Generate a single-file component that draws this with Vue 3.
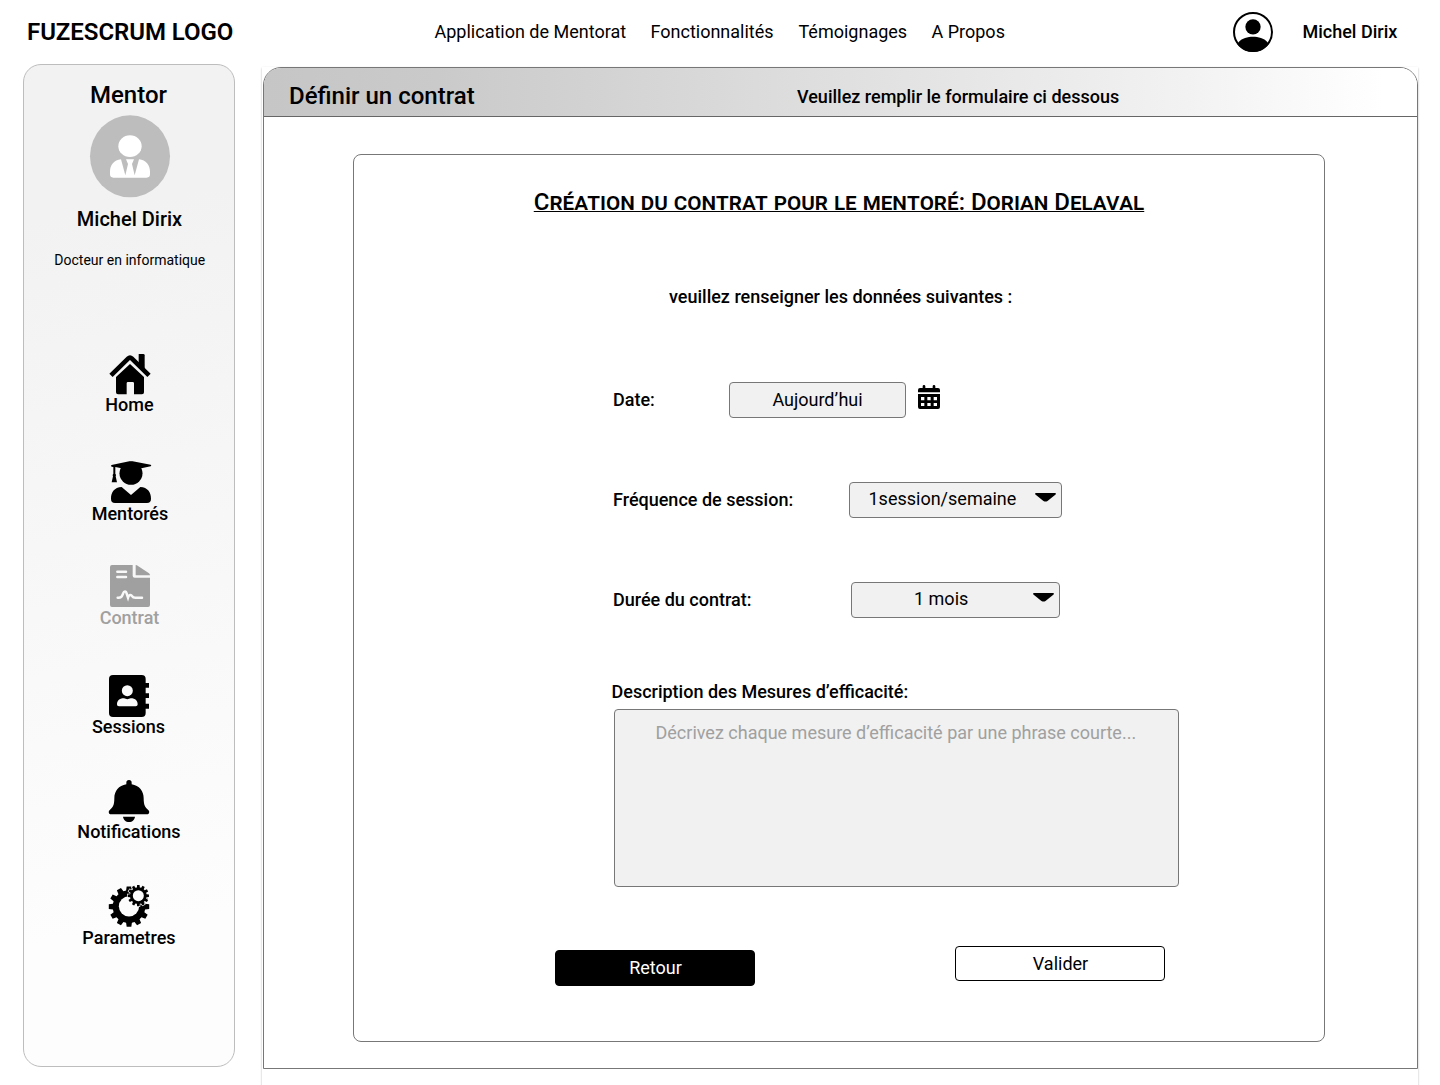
<script setup>
const links = [
  { label: 'Application de Mentorat', width: 216 },
  { label: 'Fonctionnalités', width: 148 },
  { label: 'Témoignages', width: 133 },
  { label: 'A Propos', width: 90 },
]

const menu = [
  { id: 'home', label: 'Home' },
  { id: 'mentees', label: 'Mentorés' },
  { id: 'contract', label: 'Contrat', active: true },
  { id: 'sessions', label: 'Sessions' },
  { id: 'bell', label: 'Notifications' },
  { id: 'gears', label: 'Parametres' },
]

// Closed outline of a cog with `n` trapezoidal teeth
function gear(cx, cy, outer, inner, n) {
  const pts = []
  const step = (Math.PI * 2) / n
  for (let i = 0; i < n; i++) {
    const a = i * step - Math.PI / 2
    for (const [r, o] of [[inner, -0.34], [outer, -0.22], [outer, 0.22], [inner, 0.34]]) {
      pts.push(`${(cx + r * Math.cos(a + o * step)).toFixed(1)} ${(cy + r * Math.sin(a + o * step)).toFixed(1)}`)
    }
  }
  return `M${pts.join('L')}Z`
}
const bigGear = gear(63, 65, 61, 49, 12)
const smallGear = gear(91, 32, 32, 25, 12)
</script>

<template>
  <div class="page">
    <header class="top">
      <div class="logo">FUZESCRUM LOGO</div>
      <nav class="links">
        <a v-for="l in links" :key="l.label" :style="{ width: l.width + 'px' }">{{ l.label }}</a>
      </nav>
      <svg class="avatar" viewBox="0 0 120 120">
        <circle cx="60" cy="60" r="57" fill="#fff" stroke="#000" stroke-width="6" />
        <circle cx="60" cy="44.500" r="23" />
        <path d="M13 97L17 90C27 78 44 74 60 74s33 4 43 16L107 97A60 60 0 0 1 13 97Z" />
      </svg>
      <div class="user">Michel Dirix</div>
    </header>

    <div class="body">
      <aside class="side">
        <h2>Mentor</h2>
        <svg class="portrait" viewBox="0 0 240 246">
          <ellipse cx="120" cy="124" rx="120" ry="123" fill="#bdbdbd" />
          <g fill="#fff">
            <ellipse cx="120" cy="93.500" rx="35" ry="32.500" />
            <path d="M93 133C72 135 60 151 60 170v8q0 10 10 10h100q10 0 10-10v-8c0-19-12-35-33-37L134 181l-8-34 6-14h-24l6 14-8 34Z" />
          </g>
        </svg>
        <div class="name">Michel Dirix</div>
        <div class="job">Docteur en informatique</div>
        <nav class="menu">
          <a v-for="m in menu" :key="m.id" :class="[m.id, { active: m.active }]">
            <svg viewBox="0 0 126 126" fill="currentColor">
              <template v-if="m.id === 'home'">
                <path d="M24 72 66 33l42 39v46q0 6-6 6H78V91q0-4-4-4H60q-4 0-4 4v33H30q-6 0-6-6Z" />
                <path d="m9 67 52-51q5-5 10 0l52 51" fill="none" stroke="currentColor" stroke-width="14" stroke-linejoin="round" />
                <path d="M92 3h14q4 0 4 4v43L92 32Z" />
              </template>
              <template v-else-if="m.id === 'mentees'">
                <circle cx="69" cy="37" r="34.500" />
                <path d="M9 14Q10 11 14 11L64 1q5-1 10 0l54 10q4 3 0 5L76 27q-5 1-10 0L22 18v20q4 3 1 8l4 18H11l4-18q-3-5 1-8V18Q9 18 9 14Z" />
                <path d="M41 78 69 102 97 78c22 1 32 16 32 35 0 9-4 13-12 13H21c-8 0-12-4-12-13 0-19 10-34 32-35Z" />
              </template>
              <template v-else-if="m.id === 'contract'">
                <path d="M12 0h62v32q0 6 6 6h46v82q0 6-6 6H12q-6 0-6-6V6q0-6 6-6Z" />
                <path d="M83 0q4 0 7 3l33 22q3 3 3 6H83Z" />
                <path d="M28 20h26M28 36h26" fill="none" stroke="#f8f8f8" stroke-width="7.500" stroke-linecap="round" />
                <path d="M29 98c10 1 12-2 16-12 3-9 9-9 11 0l4 12c3-10 9-10 13-4 2 4 5 4 9 4h20" fill="none" stroke="#f8f8f8" stroke-width="7.500" stroke-linecap="round" />
              </template>
              <template v-else-if="m.id === 'sessions'">
                <rect x="3" y="0" width="110" height="126" rx="12" />
                <path d="M106 24h17v14h-17zM106 55h17v14h-17zM106 86h17v15h-17z" />
                <circle cx="58" cy="47" r="16.500" fill="#fafafa" />
                <path d="M48 70q10 5 20 0c15 0 21 8 21 18 0 4-3 6-6 6H33c-4 0-6-2-6-6 0-10 6-18 21-18Z" fill="#fafafa" />
              </template>
              <template v-else-if="m.id === 'bell'">
                <path d="M55 13V8a8 8 0 0 1 16 0v5c23 4 36 20 36 42 0 20 4 27 13 34 7 6 3 14-3 14H9c-6 0-10-8-3-14 9-7 13-14 13-34 0-22 13-38 36-42Z" />
                <path d="M45 110h36c-1 9-8 16-18 16s-17-7-18-16Z" />
              </template>
              <template v-else>
                <path :d="bigGear" />
                <circle cx="63" cy="64" r="30.500" fill="#fcfcfc" />
                <path :d="smallGear" stroke="#fcfcfc" stroke-width="4" />
                <path :d="smallGear" />
                <circle cx="91" cy="32" r="16.500" fill="#fcfcfc" />
              </template>
            </svg>
            <span>{{ m.label }}</span>
          </a>
        </nav>
      </aside>

      <main class="panel">
        <div class="frame">
          <div class="bar">
            <h1>Définir un contrat</h1>
            <p>Veuillez remplir le formulaire ci dessous</p>
          </div>
          <section class="card">
            <h3><span>Création du contrat pour le mentoré: Dorian Delaval</span></h3>
            <p class="intro">veuillez renseigner les données suivantes :</p>
            <div class="row date">
              <label>Date:</label>
              <div class="field">Aujourd’hui</div>
              <svg class="cal" viewBox="0 0 66 72">
                <path d="M18 0q4 0 4 4v5h22V4q0-4 4-4t4 4v5h8q6 0 6 6v7H0v-7q0-6 6-6h8V4q0-4 4-4Z" />
                <path fill-rule="evenodd" d="M0 27h66v39q0 6-6 6H6q-6 0-6-6ZM9 36v10h10V36Zm19 0v10h10V36Zm19 0v10h10V36ZM9 54v9h10v-9Zm19 0v9h10v-9Zm19 0v9h10v-9Z" />
              </svg>
            </div>
            <div class="row freq">
              <label>Fréquence de session:</label>
              <div class="field select"><span>1session/semaine</span>
                <svg viewBox="0 0 62 26"><path d="M3 0h56q5 1 1 5L37 23q-6 4-12 0L2 5q-4-4 1-5Z" /></svg>
              </div>
            </div>
            <div class="row term">
              <label>Durée du contrat:</label>
              <div class="field select"><span>1 mois</span>
                <svg viewBox="0 0 62 26"><path d="M3 0h56q5 1 1 5L37 23q-6 4-12 0L2 5q-4-4 1-5Z" /></svg>
              </div>
            </div>
            <label class="desc">Description des Mesures d’efficacité:</label>
            <div class="area">Décrivez chaque mesure d’efficacité par une phrase courte...</div>
            <div class="actions">
              <button class="back">Retour</button>
              <button class="ok">Valider</button>
            </div>
          </section>
        </div>
      </main>
    </div>
  </div>
</template>

<style>
body { background: #fff; overflow: hidden; }
</style>

<style scoped>
.page { width: 1440px; height: 1085px; overflow: hidden; box-sizing: border-box; font-family: Roboto, sans-serif; font-size: 18px; color: #000; background: #fff; display: flex; flex-direction: column; white-space: nowrap; }
.page * { box-sizing: border-box; }
h1, h2, h3, p { margin: 0; font-weight: 500; }
svg { display: block; flex: none; }
.top { height: 64px; flex: none; display: flex; align-items: center; padding-left: 27px; }
.logo { width: 407.500px; font-size: 24px; font-weight: 600; letter-spacing: -.05px; }
.links { display: flex; width: 798.500px; padding-bottom: 2px; }
.avatar { width: 40px; height: 40px; }
.user { margin-left: 29.500px; padding-bottom: 2px; font-weight: 500; }
.body { display: flex; height: 1021px; }
.side { margin-left: 23px; width: 212px; height: 1002.500px; border: 1px solid #bdbdbd; border-radius: 18px; background: linear-gradient(170deg, #f2f2f2 15%, #fdfdfd 85%); display: flex; flex-direction: column; align-items: center; }
.side h2 { font-size: 24px; line-height: 28px; margin-top: 16px; margin-left: -1px; }
.portrait { width: 80px; height: 82px; margin-top: 6px; margin-left: 1px; overflow: visible; }
.name { margin-top: 10px; font-size: 20px; line-height: 24px; font-weight: 500; margin-left: 1px; }
.job { margin-top: 21px; font-size: 14px; line-height: 16px; margin-left: 1.500px; }
.menu { margin-top: 85px; display: grid; grid-template-rows: 108px 104px 110px 105px 105px 70px; width: 100%; font-weight: 500; }
.menu a { display: flex; flex-direction: column; align-items: center; }
.menu svg { width: 42px; height: 42px; overflow: visible; }
.menu span { line-height: 20px; }
.menu .mentees span, .menu .contract span, .menu .gears span { padding-top: 1px; }
.menu .home span, .menu .contract span { padding-left: 1px; }
.menu .mentees span { padding-left: 2px; }
.menu .sessions span { padding-right: 1px; }
.active { color: #a0a0a0; }
.panel { margin: 3px 0 0 27px; width: 1156px; height: 1030px; padding-left: 1px; box-shadow: 0 1px 2px rgba(0, 0, 0, .28); }
.frame { width: 1155px; height: 1002px; border: 1px solid #777; border-radius: 18px 18px 0 0; background: #fff; overflow: hidden; }
.bar { height: 49px; border-bottom: 1px solid #666; background: linear-gradient(90deg, #c6c6c6, #cacaca 15%, #f2f2f2 80%, #fff 97%); display: flex; align-items: center; padding-left: 25px; }
.bar h1 { width: 508px; font-size: 24px; line-height: 28px; padding-top: 7px; }
.bar p { padding-top: 9px; }
.card { margin: 37px 0 0 89px; width: 972px; height: 888px; border: 1px solid #777; border-radius: 8px; display: flex; flex-direction: column; }
.card h3 { margin-top: 33px; text-align: center; font-size: 24px; line-height: 28px; font-variant: small-caps; text-decoration: underline; text-decoration-thickness: 1px; }
.intro { margin: 69px 0 0 315px; line-height: 24px; }
.row { display: flex; height: 36px; margin-left: 259px; align-items: center; }
.row label, .desc { font-weight: 500; }
.row label { padding-bottom: 2px; }
.date { margin-top: 73px; }
.freq, .term { margin-top: 64px; }
.field { height: 36px; border: 1px solid #777; border-radius: 4px; background: #f1f1f1; text-align: center; line-height: 33px; }
.date label { width: 116px; }
.date .field { width: 177px; }
.cal { width: 22px; height: 24px; margin-left: 12px; margin-top: -6px; }
.freq label { width: 236px; }
.term label { width: 238px; }
.select { display: flex; align-items: flex-start; line-height: 31px; }
.freq .field { width: 213px; padding-left: 18.500px; }
.term .field { width: 209px; padding-left: 62px; }
.select svg { width: 21px; height: 9px; margin: 10px 5px 0 auto; }
.desc { margin: 62px 0 0 257.500px; line-height: 24px; }
.area { margin: 5px 0 0 260px; width: 565px; height: 178px; border: 1px solid #777; border-radius: 4px; background: #f1f1f1; color: #a0a0a0; padding: 12px 0 0 40.500px; line-height: 22px; }
.actions { display: flex; margin: 59px 0 0 201px; align-items: flex-start; }
button { font: 400 18px/33px Roboto, sans-serif; padding: 0 0 0 1px; border: 1px solid #000; border-radius: 4px; }
.back { margin-top: 4px; width: 200px; height: 36px; line-height: 34px; background: #000; color: #fff; }
.ok { margin-left: 200px; width: 210px; height: 35px; background: #fff; color: #000; }
</style>
